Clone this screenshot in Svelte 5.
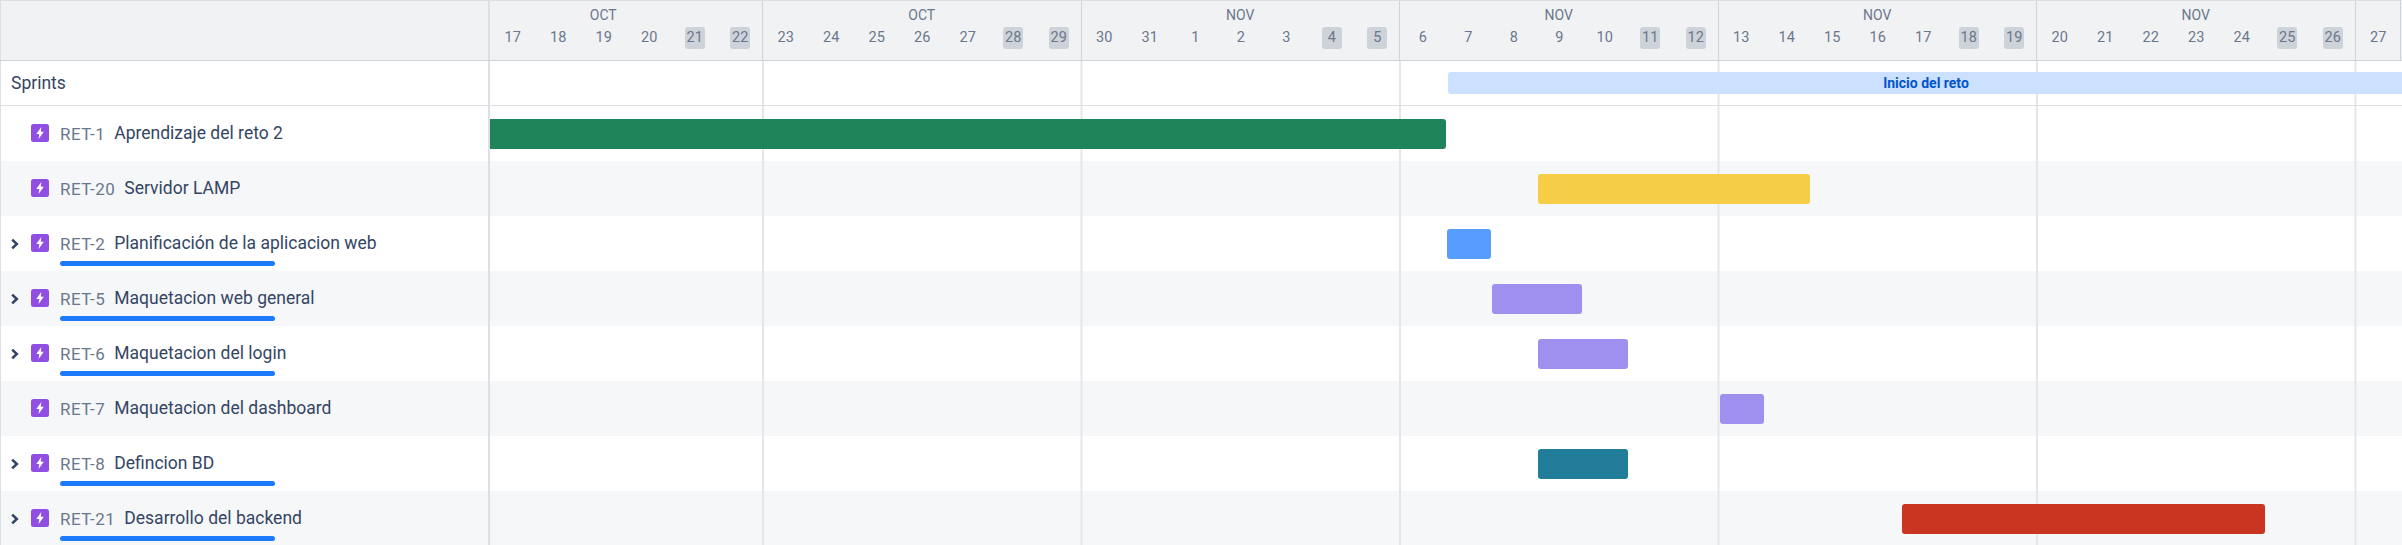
<script>
    const dayW = 45.5;

    // first week is cut off on the left, so it only has 6 days
    const weeks = [
        {month: "OCT", days: [17, 18, 19, 20, 21, 22], cut: 1},
        {month: "OCT", days: [23, 24, 25, 26, 27, 28, 29], cut: 0},
        {month: "NOV", days: [30, 31, 1, 2, 3, 4, 5], cut: 0},
        {month: "NOV", days: [6, 7, 8, 9, 10, 11, 12], cut: 0},
        {month: "NOV", days: [13, 14, 15, 16, 17, 18, 19], cut: 0},
        {month: "NOV", days: [20, 21, 22, 23, 24, 25, 26], cut: 0},
        {month: "", days: [27], cut: 0}
    ];

    const rows = [
        {id: "RET-1", title: "Aprendizaje del reto 2", kids: false, start: 0, end: 21, color: "#1f845a"},
        {id: "RET-20", title: "Servidor LAMP", kids: false, start: 23, end: 29, color: "#f5cd47"},
        {id: "RET-2", title: "Planificación de la aplicacion web", kids: true, start: 21, end: 22, color: "#579dff"},
        {id: "RET-5", title: "Maquetacion web general", kids: true, start: 22, end: 24, color: "#9f8fef"},
        {id: "RET-6", title: "Maquetacion del login", kids: true, start: 23, end: 25, color: "#9f8fef"},
        {id: "RET-7", title: "Maquetacion del dashboard", kids: false, start: 27, end: 28, color: "#9f8fef"},
        {id: "RET-8", title: "Defincion BD", kids: true, start: 23, end: 25, color: "#227d9b"},
        {id: "RET-21", title: "Desarrollo del backend", kids: true, start: 31, end: 39, color: "#ca3521"}
    ];

    function isWeekend(weekIndex, dayIndex) {
        return weeks[weekIndex].days.length > 1 && dayIndex >= weeks[weekIndex].days.length - 2;
    }
</script>

<div class="gantt">
    <div class="head">
        <div class="side head-side"></div>
        {#each weeks as week, w}
            <div class="week" style="width: {week.days.length * dayW}px">
                <div class="month" style="padding-right: {week.cut * dayW}px">{week.month}</div>
                <div class="days">
                    {#each week.days as day, d}
                        <div class="day"><span class:weekend={isWeekend(w, d)}>{day}</span></div>
                    {/each}
                </div>
            </div>
        {/each}
    </div>

    <div class="row sprints">
        <div class="side sprints-name">Sprints</div>
        <div class="track sprint-track">
            <div class="sprint">Inicio del reto</div>
        </div>
    </div>

    {#each rows as row, i}
        <div class="row" class:band={i % 2 === 1}>
            <div class="side task">
                <div class="chev">
                    {#if row.kids}
                        <svg width="10" height="12" viewBox="0 0 10 12">
                            <path d="M2.2 1.6 L6.8 6 L2.2 10.4" fill="none" stroke="#344563" stroke-width="2.6"/>
                        </svg>
                    {/if}
                </div>
                <svg class="epic" width="18" height="18" viewBox="0 0 18 18">
                    <rect width="18" height="18" rx="2.5" fill="#904ee2"/>
                    <path d="M10.3 3 L5.3 10 H8.2 L7.6 15 L12.8 7.8 H9.8 Z" fill="#fff"/>
                </svg>
                <div class="label">
                    <div class="text">
                        <span class="id">{row.id}</span>
                        <span class="title">{row.title}</span>
                    </div>
                    {#if row.kids}
                        <div class="progress"></div>
                    {/if}
                </div>
            </div>
            <div class="track">
                <div class="bar" class:flush={row.start === 0} style="grid-column: {row.start + 1} / {row.end + 1}; background: {row.color}"></div>
            </div>
        </div>
    {/each}
</div>

<style>
    :global(body) {
        margin: 0;
        background: #fff;
    }

    .gantt {
        width: 2402px;
        height: 545px;
        overflow: hidden;
        font-family: Roboto, sans-serif;
        box-sizing: border-box;
    }

    .head {
        display: flex;
        height: 61px;
        box-sizing: border-box;
        background: #f1f2f4;
        border-top: 1px solid #dcdfe4;
        border-bottom: 1px solid #d0d3da;
    }

    .side {
        flex: 0 0 490px;
        width: 490px;
        box-sizing: border-box;
        border-right: 2px solid #dcdfe4;
        border-left: 1px solid #dcdfe4;
    }

    .week {
        flex: none;
        box-sizing: border-box;
        border-right: 1px solid #d0d3da;
        color: #6b778c;
    }

    .month {
        height: 26px;
        padding-top: 5px;
        box-sizing: border-box;
        text-align: center;
        font-size: 14px;
        line-height: 18px;
    }

    .days {
        display: flex;
    }

    .day {
        width: 45.5px;
        flex: none;
        text-align: center;
        font-size: 14.5px;
        line-height: 22px;
    }

    .day span {
        display: inline-block;
        min-width: 20px;
        border-radius: 3px;
    }

    .day span.weekend {
        background: #ced2d9;
    }

    .row {
        display: flex;
        height: 55px;
    }

    .row.sprints {
        height: 45px;
        box-sizing: border-box;
        border-bottom: 1px solid #dcdfe4;
    }

    .row.band {
        background: #f6f7f9;
    }

    .sprints-name {
        padding: 10px 0 0 10px;
        font-size: 17.5px;
        line-height: 24px;
        color: #344563;
    }

    .track {
        flex: 1;
        display: grid;
        grid-template-columns: repeat(42, 45.5px);
        align-items: center;
        background-image: linear-gradient(to right, #e4e6ea 2px, transparent 2px);
        background-size: 318.5px 100%;
        background-position: 272px 0;
    }

    .sprint-track {
        display: block;
        padding: 11px 0 0 958px;
    }

    .sprint {
        height: 22px;
        margin-right: -2px;
        background: #cce0ff;
        border-radius: 3px 0 0 3px;
        color: #0055cc;
        font-size: 14px;
        font-weight: 700;
        line-height: 22px;
        text-align: center;
    }

    .bar {
        height: 30px;
        border-radius: 3px;
        margin-left: 1px;
    }

    .bar.flush {
        margin-left: 0;
        border-radius: 0 3px 3px 0;
    }

    .task {
        display: flex;
        align-items: flex-start;
        padding-top: 18px;
    }

    .chev {
        width: 30px;
        padding: 1px 0 0 9px;
        box-sizing: border-box;
        flex: none;
    }

    .epic {
        flex: none;
    }

    .label {
        margin-left: 11px;
        margin-top: -3px;
    }

    .text {
        display: flex;
        gap: 9px;
        height: 24px;
        white-space: nowrap;
    }

    .id {
        font-size: 17px;
        line-height: 27px;
        letter-spacing: 0.5px;
        color: #6b778c;
    }

    .title {
        font-size: 17.5px;
        line-height: 24px;
        color: #344563;
    }

    .progress {
        width: 215px;
        height: 5px;
        margin-top: 6px;
        background: #1d7afc;
        border-radius: 3px;
    }
</style>
